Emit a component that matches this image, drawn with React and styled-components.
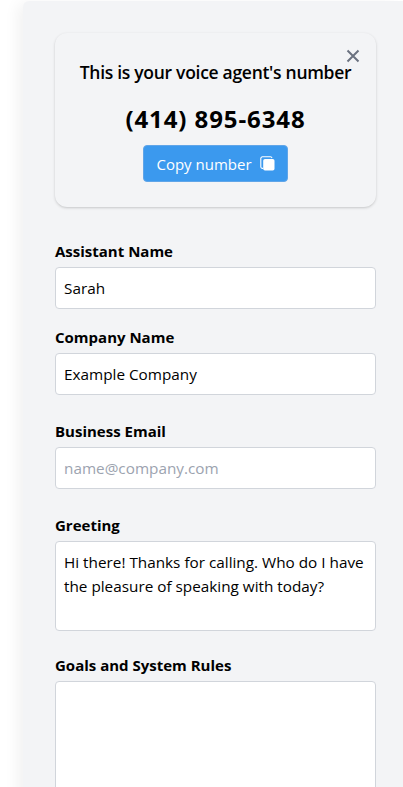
import React from "react";
import styled, { createGlobalStyle } from "styled-components";

const Global = createGlobalStyle`
  html, body { margin: 0; padding: 0; background: #fff; height: 100%; overflow: hidden; }
  body { font-family: "Open Sans", "Noto Sans", "Liberation Sans", sans-serif; color: #000; }
  * { box-sizing: border-box; }
`;
const Page = styled.div`
  height: 787px;
  overflow: hidden;
  padding: 1px 0 0 23px;
`;
const Panel = styled.main`
  width: 380px;
  min-height: 900px;
  padding: 32px 0 0 32px;
  background: #f3f4f6;
  border-radius: 6px 0 0 0;
  box-shadow: -8px 0 15px -3px rgba(0, 0, 0, 0.06);
`;
const Column = styled.div`
  width: 321px;
  display: flex;
  flex-direction: column;
`;
const Card = styled.section`
  position: relative;
  height: 174px;
  margin-bottom: 35px;
  padding-top: 27px;
  display: flex;
  flex-direction: column;
  align-items: center;
  background: #f3f4f6;
  border-radius: 12px;
  box-shadow: 0 1px 3px rgba(0, 0, 0, 0.16), 0 1px 2px -1px rgba(0, 0, 0, 0.1);
`;
const Close = styled.button`
  position: absolute;
  top: 16px;
  right: 16px;
  width: 14px;
  height: 14px;
  padding: 0;
  border: 0;
  background: none;
  color: #6b7280;
  display: flex;
`;
const Heading = styled.h2`
  margin: 0;
  font-size: 17.5px;
  line-height: 24px;
  font-weight: 600;
  letter-spacing: -0.29px;
`;
const Phone = styled.div`
  margin-top: 19px;
  font-size: 24px;
  line-height: 32px;
  font-weight: 700;
  letter-spacing: 0.9px;
`;
const CopyButton = styled.button`
  margin-top: 10px;
  width: 145px;
  height: 37px;
  display: flex;
  align-items: center;
  justify-content: center;
  gap: 8px;
  border: 1px solid #60a5e8;
  border-radius: 4px;
  background: #3b99ee;
  color: #fff;
  font: inherit;
  font-size: 15px;
`;
const Field = styled.div`
  display: flex;
  flex-direction: column;
  margin-bottom: ${(p) => p.$gap}px;
`;
const Label = styled.label`
  font-size: 15px;
  line-height: 18px;
  font-weight: 700;
  margin-bottom: 7px;
`;
const inputCss = `
  width: 100%;
  display: block;
  background: #fff;
  border: 1px solid #d1d5db;
  border-radius: 4px;
  color: #000;
  font-family: inherit;
  font-size: 15.3px;
  outline: none;
  padding: 8px;
`;
const Input = styled.input`
  ${inputCss}
  height: 42px;
  &::placeholder { color: #9ca3af; opacity: 1; }
`;
const Area = styled.textarea`
  ${inputCss}
  height: ${(p) => p.$h}px;
  line-height: 24px;
  resize: none;
`;

const CopyIcon = () => (
  <svg width="15" height="15" viewBox="0 0 15 15" fill="none">
    <path d="M3 12.4H2.4A1.6 1.6 0 0 1 .8 10.8V2.4A1.6 1.6 0 0 1 2.4 .8H10.4A1.6 1.6 0 0 1 12 2" stroke="#fff" strokeWidth="1.1" />
    <rect x="3.2" y="3" width="11.3" height="11.5" rx="1.8" fill="#fff" />
  </svg>
);

export default function App() {
  return (
    <Page>
      <Global />
      <Panel>
        <Column>
          <Card>
            <Close aria-label="Close">
              <svg width="14" height="14" viewBox="0 0 14 14" fill="none" stroke="currentColor" strokeWidth="2">
                <path d="M1.5 1.5 12.5 12.5M12.5 1.5 1.5 12.5" />
              </svg>
            </Close>
            <Heading>This is your voice agent's number</Heading>
            <Phone>(414) 895-6348</Phone>
            <CopyButton>Copy number <CopyIcon /></CopyButton>
          </Card>
          <Field $gap={19}>
            <Label>Assistant Name</Label>
            <Input defaultValue="Sarah" />
          </Field>
          <Field $gap={27}>
            <Label>Company Name</Label>
            <Input defaultValue="Example Company" />
          </Field>
          <Field $gap={27}>
            <Label>Business Email</Label>
            <Input placeholder="name@company.com" />
          </Field>
          <Field $gap={25}>
            <Label>Greeting</Label>
            <Area $h={90} defaultValue="Hi there! Thanks for calling. Who do I have the pleasure of speaking with today?" />
          </Field>
          <Field $gap={16}>
            <Label>Goals and System Rules</Label>
            <Area $h={200} />
          </Field>
        </Column>
      </Panel>
    </Page>
  );
}
